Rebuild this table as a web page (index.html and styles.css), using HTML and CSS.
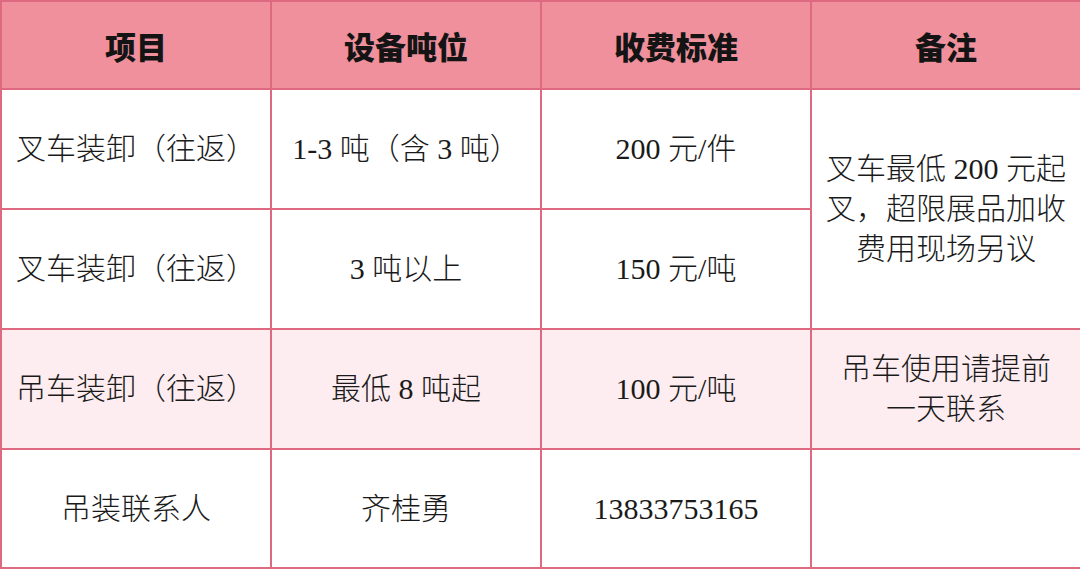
FILE: index.html
```html
<!DOCTYPE html>
<html lang="zh">
<head>
<meta charset="utf-8">
<link rel="stylesheet" href="styles.css">
</head>
<body>
<table class="fee">
  <colgroup>
    <col class="c1"><col class="c2"><col class="c3"><col class="c4">
  </colgroup>
  <thead>
    <tr class="head">
      <th>项目</th><th>设备吨位</th><th>收费标准</th><th>备注</th>
    </tr>
  </thead>
  <tbody>
    <tr class="row">
      <td>叉车装卸（往返）</td>
      <td>1-3 吨（含 3 吨）</td>
      <td>200 元/件</td>
      <td rowspan="2" class="note">叉车最低 200 元起<br>叉，超限展品加收<br>费用现场另议</td>
    </tr>
    <tr class="row">
      <td>叉车装卸（往返）</td>
      <td>3 吨以上</td>
      <td>150 元/吨</td>
    </tr>
    <tr class="row tint">
      <td>吊车装卸（往返）</td>
      <td>最低 8 吨起</td>
      <td>100 元/吨</td>
      <td class="note">吊车使用请提前<br>一天联系</td>
    </tr>
    <tr class="row last">
      <td>吊装联系人</td>
      <td>齐桂勇</td>
      <td>13833753165</td>
      <td></td>
    </tr>
  </tbody>
</table>
</body>
</html>
```

FILE: styles.css
```css
html, body {
  margin: 0;
  padding: 0;
  background: #ffffff;
}
.fee {
  width: 1080px;
  border-collapse: collapse;
  table-layout: fixed;
  font-family: "Liberation Serif", "Noto Sans CJK SC", serif;
  color: #1a1a1a;
}
.c1, .c2, .c3, .c4 { width: 270px; }
.fee th, .fee td {
  border: 2px solid #dd6a80;
  text-align: center;
  vertical-align: middle;
  padding: 0;
}
.head th {
  height: 86px;
  background: #ef909c;
  font-family: "Noto Sans CJK SC", sans-serif;
  font-weight: 900;
  font-size: 31px;
  color: #141414;
}
.row td {
  height: 118px;
  font-size: 30px;
  font-weight: 300;
  line-height: 40px;
}
.note {
  line-height: 40px;
}
.tint td {
  background: #fdedf0;
}
.last td {
  height: 117px;
}
```
